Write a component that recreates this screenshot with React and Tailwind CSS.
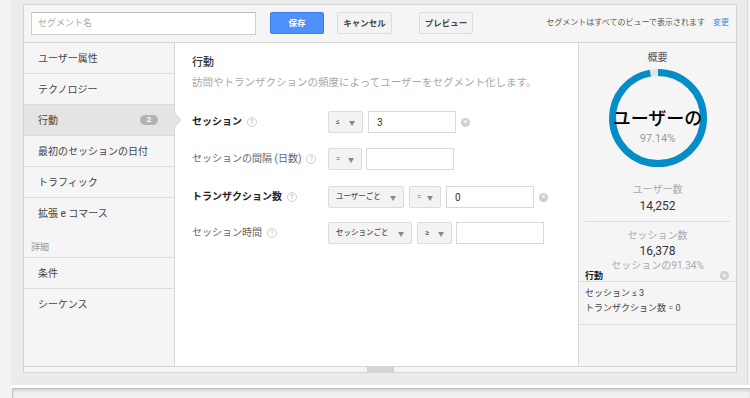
import React from 'react';

const font = "font-['Roboto','Noto_Sans_CJK_JP',sans-serif]";

const navTop = [
  { label: 'ユーザー属性' },
  { label: 'テクノロジー' },
  { label: '行動', badge: '2', active: true },
  { label: '最初のセッションの日付' },
  { label: 'トラフィック' },
];

const Help = () => (
  <span className="ml-[5px] inline-flex h-[10px] w-[10px] items-center justify-center rounded-full border border-[#d0d0d0] text-[7px] leading-none text-[#c0c0c0]">
    ?
  </span>
);

const Clear = ({ className = '' }) => (
  <span className={`inline-flex h-[9px] w-[9px] items-center justify-center rounded-full bg-[#cfcfcf] text-[8px] leading-none text-white ${className}`}>
    ×
  </span>
);

const Select = ({ value, width }) => (
  <div
    className={`flex h-[22px] items-center justify-between gap-[4px] whitespace-nowrap rounded-[2px] border border-[#dcdcdc] bg-[#f3f3f3] pl-[7px] pr-[7px] text-[7.5px] font-medium text-[#555] ${width}`}
  >
    <span>{value}</span>
    <span className="text-[6px] text-[#888]">▼</span>
  </div>
);

const Input = ({ value, width }) => (
  <div className={`flex h-[22px] items-center border border-[#d9d9d9] bg-white pl-[8px] text-[10px] text-[#333] ${width}`}>
    {value}
  </div>
);

const Row = ({ label, bold, help = true, children, className = '' }) => (
  <div className={`flex h-[22px] items-center ${className}`}>
    <div className={`flex w-[136px] items-center whitespace-nowrap text-[10px] leading-[12px] ${bold ? 'font-bold text-[#222]' : 'text-[#666]'}`}>
      {label}
      {help && <Help />}
    </div>
    {children}
  </div>
);

export default function App() {
  return (
    <div className={`h-[398px] w-[750px] overflow-hidden bg-[#f3f3f3] ${font}`}>
      <div className="ml-[11px] w-[737px] border-r border-[#dadada] bg-[#ebebeb] pb-[12px] pl-[12px] pr-[10px] pt-[4px]">
        <div className="border border-[#d4d4d4] bg-[#f5f5f5]">
          {/* top bar */}
          <div className="flex h-[38px] items-start border-b border-[#d6d6d6] pl-[7px] pr-[7px] pt-[7px]">
            <div className="flex h-[23px] w-[225px] items-center border border-[#cfcfcf] border-t-[#bdbdbd] bg-white pl-[6px] text-[9px] text-[#aaa]">
              セグメント名
            </div>
            <button className="ml-[14px] flex h-[22px] w-[54px] items-center justify-center rounded-[2px] border border-[#3b7de9] bg-[#4d90fe] text-[8.5px] font-bold text-white">
              保存
            </button>
            <button className="ml-[13px] flex h-[22px] w-[55px] items-center justify-center rounded-[2px] border border-[#dcdcdc] bg-[#f3f3f3] text-[8.5px] font-bold text-[#444]">
              キャンセル
            </button>
            <button className="ml-[27px] flex h-[22px] w-[54px] items-center justify-center rounded-[2px] border border-[#dcdcdc] bg-[#f3f3f3] text-[8.5px] font-bold text-[#444]">
              プレビュー
            </button>
            <div className="ml-auto flex h-[22px] items-center text-[8px] text-[#555]">
              セグメントはすべてのビューで表示されます
              <span className="ml-[8px] text-[#4a86e8]">変更</span>
            </div>
          </div>

          {/* columns */}
          <div className="flex h-[323px]">
            {/* nav */}
            <div className="w-[151px] shrink-0 border-r border-[#d6d6d6] text-[10px] text-[#444]">
              {navTop.map((item) => (
                <div
                  key={item.label}
                  className={`relative flex h-[31px] items-center justify-between border-b border-[#dcdcdc] pl-[14px] pr-[16px] ${item.active ? 'bg-[#e4e4e4]' : ''}`}
                >
                  <span>{item.label}</span>
                  {item.badge && (
                    <span className="flex h-[10px] w-[18px] items-center justify-center rounded-full bg-[#b3b3b3] text-[8px] font-bold leading-none text-white">
                      {item.badge}
                    </span>
                  )}
                  {item.active && (
                    <svg className="absolute right-[-8px] top-[8px] z-10" width="8" height="14" viewBox="0 0 8 14">
                      <polygon points="0,0 7,7 0,14" fill="#e4e4e4" />
                      <polyline points="0,0 7,7 0,14" fill="none" stroke="#d0d0d0" strokeWidth="1" />
                    </svg>
                  )}
                </div>
              ))}
              <div className="flex h-[30px] items-center pl-[14px]">拡張 e コマース</div>
              <div className="flex h-[30px] items-end border-b border-[#dcdcdc] pb-[3px] pl-[7px] text-[9px] text-[#999]">
                詳細
              </div>
              <div className="flex h-[31px] items-center border-b border-[#dcdcdc] pl-[14px]">条件</div>
              <div className="flex h-[31px] items-center pl-[14px]">シーケンス</div>
            </div>

            {/* middle */}
            <div className="w-[403px] shrink-0 bg-white pl-[17px] pt-[13px]">
              <div className="text-[11px] font-medium leading-[14px] text-[#333]">行動</div>
              <div className="mt-[6px] whitespace-nowrap text-[10.5px] leading-[14px] text-[#a8a8a8]">
                訪問やトランザクションの頻度によってユーザーをセグメント化します。
              </div>
              <Row label="セッション" bold className="mt-[21px]">
                <Select value="≤" width="w-[35px]" />
                <div className="ml-[5px]">
                  <Input value="3" width="w-[88px]" />
                </div>
                <Clear className="ml-[5px]" />
              </Row>
              <Row label="セッションの間隔 (日数)" className="mt-[15px]">
                <Select value="=" width="w-[34px]" />
                <div className="ml-[4px]">
                  <Input value="" width="w-[88px]" />
                </div>
              </Row>
              <Row label="トランザクション数" bold className="mt-[16px]">
                <Select value="ユーザーごと" width="w-[76px]" />
                <div className="ml-[5px]">
                  <Select value="=" width="w-[32px]" />
                </div>
                <div className="ml-[5px]">
                  <Input value="0" width="w-[88px]" />
                </div>
                <Clear className="ml-[5px]" />
              </Row>
              <Row label="セッション時間" className="mt-[14px]">
                <Select value="セッションごと" width="w-[84px]" />
                <div className="ml-[5px]">
                  <Select value="≥" width="w-[35px]" />
                </div>
                <div className="ml-[4px]">
                  <Input value="" width="w-[88px]" />
                </div>
              </Row>
            </div>

            {/* summary */}
            <div className="flex w-[158px] shrink-0 flex-col border-l border-[#d6d6d6] bg-[#f5f5f5]">
              <div className="pt-[9px] text-center text-[10px] leading-[12px] text-[#555]">概要</div>
              <div className="relative mx-auto mt-[5px] h-[98px] w-[98px]">
                <svg width="98" height="98" viewBox="0 0 98 98">
                  <circle cx="49" cy="49" r="45.5" fill="none" stroke="#e3e3e3" strokeWidth="7" />
                  <circle
                    cx="49"
                    cy="49"
                    r="45.5"
                    fill="none"
                    stroke="#058dc7"
                    strokeWidth="7"
                    strokeDasharray="277.7 285.9"
                    transform="rotate(-90 49 49)"
                  />
                </svg>
                <div className="absolute inset-0 flex flex-col items-center pt-[40px]">
                  <div className="whitespace-nowrap text-[18px] font-medium leading-[20px] text-black">ユーザーの</div>
                  <div className="mt-[4px] text-[11px] leading-[12px] text-[#999]">97.14%</div>
                </div>
              </div>
              <div className="mt-[17px] text-center text-[10px] leading-[12px] text-[#aaa]">ユーザー数</div>
              <div className="mt-[3px] text-center text-[12px] leading-[14px] text-[#333]">14,252</div>
              <div className="mx-[6px] mt-[8px] border-t border-[#dcdcdc]" />
              <div className="mt-[8px] text-center text-[10px] leading-[12px] text-[#aaa]">セッション数</div>
              <div className="mt-[2px] text-center text-[12px] leading-[14px] text-[#333]">16,378</div>
              <div className="mt-[2px] text-center text-[10px] leading-[12px] text-[#aaa]">セッションの91.34%</div>
              <div className="flex h-[10px] items-end justify-between border-b border-[#dcdcdc] pl-[6px] pr-[7px]">
                <span className="text-[9px] font-bold leading-[10px] text-[#222]">行動</span>
                <Clear className="mb-[1px]" />
              </div>
              <div className="border-b border-[#dcdcdc] pb-[10px] pl-[6px] text-[9px] leading-[12px] text-[#444]">
                <div className="mt-[5px]">セッション ≤ 3</div>
                <div className="mt-[3px]">トランザクション数 = 0</div>
              </div>
            </div>
          </div>

          {/* resize strip */}
          <div className="flex h-[6px] justify-center border-t border-[#d6d6d6] bg-[#f5f5f5]">
            <div className="h-[5px] w-[27px] bg-[#d3d3d3]" />
          </div>
        </div>
      </div>
      <div className="ml-[11px] border-t-[3px] border-white">
        <div className="ml-[1px] h-[20px] border-l border-t border-[#c4c4c4] bg-[#f1f1f1] shadow-[inset_0_2px_3px_rgba(0,0,0,0.12)]" />
      </div>
    </div>
  );
}
